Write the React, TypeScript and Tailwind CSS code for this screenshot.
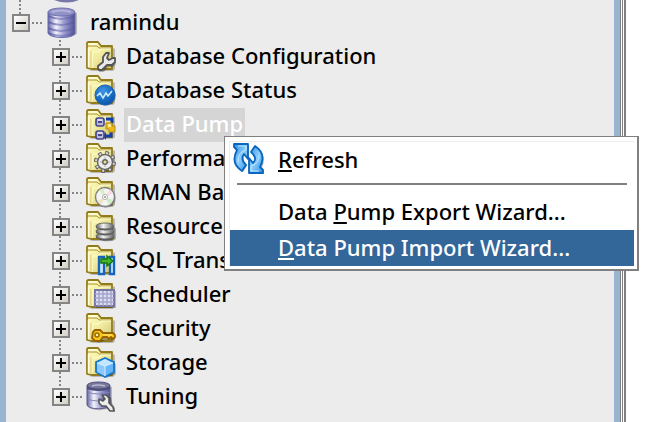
import React from "react";

const dotsX =
  "h-[2px] w-[14px] shrink-0 bg-[repeating-linear-gradient(90deg,transparent_0_2px,#858585_2px_4px)]";
const dotsY =
  "w-[2px] bg-[repeating-linear-gradient(180deg,#858585_0_2px,transparent_2px_4px)]";

function Defs() {
  return (
    <svg className="absolute size-0" aria-hidden="true">
      <defs>
        <linearGradient id="folder" x1="0" y1="0" x2="1" y2="1">
          <stop offset="0" stopColor="#fffdb8" />
          <stop offset="0.5" stopColor="#f1eb9f" />
          <stop offset="1" stopColor="#ccc070" />
        </linearGradient>
        <linearGradient id="cyl" x1="0" x2="1">
          <stop offset="0" stopColor="#6464a8" />
          <stop offset="0.3" stopColor="#f4f4fc" />
          <stop offset="0.6" stopColor="#9c9cd0" />
          <stop offset="1" stopColor="#50509a" />
        </linearGradient>
        <linearGradient id="band" x1="0" x2="1">
          <stop offset="0" stopColor="#5555a0" />
          <stop offset="0.35" stopColor="#9c9cd0" />
          <stop offset="1" stopColor="#505098" />
        </linearGradient>
        <linearGradient id="steel" x1="0" x2="1">
          <stop offset="0" stopColor="#5c5c5c" />
          <stop offset="0.4" stopColor="#f4f4f4" />
          <stop offset="1" stopColor="#606060" />
        </linearGradient>
        <radialGradient id="orb" cx="0.4" cy="0.3" r="0.7">
          <stop offset="0" stopColor="#3d94e4" />
          <stop offset="1" stopColor="#0a55ae" />
        </radialGradient>
        <linearGradient id="arrow" x1="0" y1="0" x2="1" y2="1">
          <stop offset="0" stopColor="#2d8be0" />
          <stop offset="0.5" stopColor="#8bcdfc" />
          <stop offset="1" stopColor="#2b8fe8" />
        </linearGradient>
      </defs>
    </svg>
  );
}

function Folder({ children }: { children: React.ReactNode }) {
  return (
    <svg viewBox="0 0 32 32" className="size-8 shrink-0" aria-hidden="true">
      <path d="M5 29L9 30H29L31 28V8L29 7V27Z" fill="#000" opacity="0.22" />
      <path d="M3 27V2L4 1H14L17 5H28V28H7Z" fill="url(#folder)" stroke="#927b1c" strokeWidth="1.800" strokeLinejoin="round" />
      <path d="M4 5H13L15 7H27" fill="none" stroke="#a8933a" strokeWidth="1" />
      <path d="M4.500 7V26M5 3H13" stroke="#fffee0" strokeWidth="1.400" />
      <path d="M8 27V11H14L17 8H27" fill="none" stroke="#fffdd0" strokeWidth="1.200" />
      <path d="M7 27V10" stroke="#d8cc78" strokeWidth="1" />
      {children}
    </svg>
  );
}

function Wrench() {
  return (
    <>
      <path d="M22 13L20 21L14 26L15 31H20L24 26H29L33 22V18H29L25 20Z" fill="#000" opacity="0.25" />
      <path
        d="M25 12L23 17L25 19L29 17H31V21L28 24H23L18 29H15L14 27V25L19 21V16L22 12Z"
        fill="#e9e9e9" stroke="#555" strokeWidth="1.800" strokeLinejoin="round"
      />
    </>
  );
}

function Database() {
  return (
    <svg viewBox="0 0 32 32" className="size-8 shrink-0" aria-hidden="true">
      <path d="M5 28Q18 34 31 27V6H27Z" fill="#000" opacity="0.22" />
      <path d="M2 5V26C4 32 28 32 29 26V5Z" fill="url(#cyl)" />
      {[9, 15, 21, 26].map((y) => (
        <path
          key={y}
          d={`M2 ${y - 1}Q15 ${y + 5} 29 ${y - 1}V${y + 1}Q15 ${y + 7} 2 ${y + 1}Z`}
          fill="url(#band)"
        />
      ))}
      <path d="M2 5V26C4 32 28 32 29 26V5" fill="none" stroke="#6a6aac" strokeWidth="1" />
      <ellipse cx="15.500" cy="5" rx="13.500" ry="4" fill="#9292c8" stroke="#7070b0" />
      <path d="M6 5Q15 2 25 5" fill="none" stroke="#b4b4dc" strokeWidth="2" />
    </svg>
  );
}

function TuningIcon() {
  return (
    <svg viewBox="0 0 32 32" className="size-8 shrink-0" aria-hidden="true">
      <path d="M5 27Q17 32 28 26V6H25Z" fill="#000" opacity="0.22" />
      <path d="M3 5V24C4 29 25 29 26 24V5Z" fill="url(#cyl)" />
      {[11, 18].map((y) => (
        <path key={y} d={`M3 ${y}Q14 ${y + 4} 26 ${y}`} fill="none" stroke="#8484b4" strokeWidth="1" />
      ))}
      <path d="M3 5V24C4 29 25 29 26 24V5" fill="none" stroke="#5a5a90" />
      <path d="M3 4V8Q14 12 26 8V4Z" fill="#4c4c78" />
      <ellipse cx="14.500" cy="4.500" rx="11.500" ry="3.500" fill="#77779c" stroke="#4f4f7c" />
      <path d="M8 5Q14 3 21 5" fill="none" stroke="#b7b7d0" strokeWidth="1.500" />
      <path d="M17 17L23 23L25 28L31 31V27L28 22L27 16Z" fill="#000" opacity="0.3" />
      <path
        d="M22 14L18 14L21 18L19 20L15 18V22L18 25H22L26 30H30L29 26L25 22V17Z"
        fill="#ededed" stroke="#555" strokeWidth="1.600" strokeLinejoin="round"
      />
    </svg>
  );
}

function Pulse() {
  return (
    <>
      <circle cx="22" cy="21" r="10" fill="#000" opacity="0.25" />
      <circle cx="21" cy="20" r="10" fill="url(#orb)" stroke="#1462b5" />
      <path d="M13 21L16 18L19 23L22 18L24 21L28 16" fill="none" stroke="#c5edff" strokeWidth="1.600" />
    </>
  );
}

function Pump() {
  return (
    <>
      <path d="M22 10H28V14M22 27H27V23" fill="none" stroke="#123fa5" strokeWidth="3" />
      <path d="M22 23V31L19 27Z" fill="#123fa5" />
      {[9, 22].map((y) => (
        <g key={y}>
          <rect x="12" y={y} width="8" height="8" rx="2" fill="#b9bade" stroke="#454588" strokeWidth="1.600" />
          <path d={`M14 ${y + 4}H18`} stroke="#454588" strokeWidth="2" />
          <path d={`M14 ${y + 2}H18`} stroke="#fff" strokeWidth="1" />
        </g>
      ))}
      <path d="M22 14H28V17H31V23H25V20H22Z" fill="#ebb91c" stroke="#b98d12" />
      <path d="M24 15H27V18H24Z" fill="#ffec96" />
    </>
  );
}

function Gear() {
  return (
    <>
      <circle cx="22.500" cy="20.500" r="9" fill="#000" opacity="0.2" />
      <circle cx="21" cy="19" r="9" fill="none" stroke="#5e5e5e" strokeWidth="4" strokeDasharray="3.500 3.568" />
      <circle cx="21" cy="19" r="7.500" fill="#ededed" stroke="#666" strokeWidth="1.500" />
      <circle cx="21" cy="19" r="9" fill="none" stroke="#d8d8d8" strokeWidth="2" strokeDasharray="2 5.068" strokeDashoffset="-0.750" />
      <path d="M21 14V24M16 19H26" stroke="#aaa" />
      <circle cx="21" cy="19" r="3" fill="#666" />
      <circle cx="21" cy="19" r="1.500" fill="#eee18d" />
    </>
  );
}

function Disc() {
  return (
    <>
      <circle cx="22" cy="21" r="10" fill="#000" opacity="0.22" />
      <circle cx="21" cy="20" r="9.500" fill="#f4f4f4" stroke="#808080" strokeWidth="1.400" />
      <path d="M21 20L15 13L20 11Z" fill="#dcecc7" />
      <path d="M21 20L26 12L29 16Z" fill="#f7d9e2" />
      <path d="M21 20L29 23L25 28Z" fill="#cdebc8" />
      <path d="M21 20L13 24L17 28Z" fill="#eee2c1" />
      <circle cx="21" cy="20" r="2.500" fill="#fff" stroke="#b1b1b1" />
      <circle cx="21" cy="20" r="1" fill="#999" />
    </>
  );
}

function Stack() {
  return (
    <>
      <path d="M15 28Q22 33 32 28V17H15Z" fill="#000" opacity="0.25" />
      {[25, 20, 15].map((y) => (
        <g key={y}>
          <path d={`M12 ${y}V${y + 2}Q21 ${y + 7} 30 ${y + 2}V${y}Z`} fill="#555" />
          <ellipse cx="21" cy={y} rx="9" ry="3" fill="url(#steel)" stroke="#6c6c6c" />
        </g>
      ))}
    </>
  );
}

function Transport() {
  return (
    <>
      <path d="M15 13H31V30H26V17H20V30H15Z" fill="#000" opacity="0.2" />
      <path d="M15 12H20V29H15Z M26 12H30V29H26Z" fill="#e8f8ff" stroke="#1764be" strokeWidth="2.400" />
      <path d="M17 13V27M28 13V27" stroke="#8fd4ff" strokeWidth="1" />
      <path d="M17 14H23V11L29 16L23 21V18H17Z" fill="#44b82a" stroke="#167512" strokeWidth="1.500" />
    </>
  );
}

function Calendar() {
  return (
    <>
      <rect x="12" y="12" width="20" height="17" fill="#000" opacity="0.22" />
      <rect x="11" y="11" width="19" height="16" fill="#dedef0" stroke="#7777a5" strokeWidth="2" />
      <path d="M15 12V27M19 12V27M23 12V27M27 12V27M11 15H30M11 19H30M11 23H30" stroke="#a5a5cb" strokeWidth="1.500" />
    </>
  );
}

function Key() {
  return (
    <>
      <path d="M10 26Q14 33 20 27H30L32 24Z" fill="#000" opacity="0.3" />
      <path d="M9 19L11 17H16L19 20H29L31 22V24L29 26L27 24L25 26L23 24H19L16 28H11L8 25Z" fill="#f9c719" stroke="#976300" strokeWidth="1.800" />
      <circle cx="13" cy="22" r="2" fill="#fff3a3" stroke="#9a6900" strokeWidth="1.500" />
      <path d="M19 22H28" stroke="#ffe975" />
    </>
  );
}

function Cube() {
  return (
    <>
      <path d="M13 16L23 12L32 17V27L23 31L13 27Z" fill="#000" opacity="0.22" />
      <path d="M12 15L21 11L30 15V25L21 30L12 25Z" fill="#69b5f9" stroke="#1476cb" strokeWidth="1.800" />
      <path d="M13 16L21 12L29 16L21 19Z" fill="#c3e6ff" />
      <path d="M13 16L21 19V29L13 25Z" fill="#8cc8ff" />
      <path d="M13 16L21 19L29 16M21 19V29" fill="none" stroke="#d9f0ff" />
    </>
  );
}

function RefreshIcon() {
  return (
    <svg viewBox="0 0 32 32" className="size-8 shrink-0" aria-hidden="true">
      <g transform="translate(1 1)" fill="#000" opacity="0.25">
        <path d="M1 1H15V16L11 11Q7 16 13 22L9 28Q-3 20 3 7L1 5Z" />
        <path d="M30 30H16V15L20 20Q25 15 18 9L22 3Q34 11 28 24L30 26Z" />
      </g>
      <g fill="url(#arrow)" stroke="#0966bd" strokeWidth="1.800" strokeLinejoin="round">
        <path d="M1 1H15V16L11 11Q7 16 13 22L9 28Q-3 20 4 7L1 4Z" />
        <path d="M30 30H16V15L20 20Q25 15 18 9L22 3Q34 11 27 24L30 27Z" />
      </g>
      <path d="M5 3H13V7Q4 10 5 19M26 28H18V23Q27 20 26 12" fill="none" stroke="#bde8ff" />
    </svg>
  );
}

function Expander({ open = false, name }: { open?: boolean; name: string }) {
  return (
    <button
      aria-label={name}
      aria-expanded={open}
      className="relative z-10 flex size-[18px] shrink-0 items-center justify-center border-2 border-[#858585] bg-linear-to-br from-white to-[#d2cec5]"
    >
      <svg viewBox="0 0 14 14" className="size-[14px]" aria-hidden="true">
        <path d={open ? "M2 7H12" : "M2 7H12M7 2V12"} stroke="#000" strokeWidth="2" />
      </svg>
    </button>
  );
}

const nodes = [
  { label: "Database Configuration", icon: <Folder><Wrench /></Folder> },
  { label: "Database Status", icon: <Folder><Pulse /></Folder> },
  { label: "Data Pump", icon: <Folder><Pump /></Folder>, selected: true },
  { label: "Performance", icon: <Folder><Gear /></Folder> },
  { label: "RMAN Backup", icon: <Folder><Disc /></Folder> },
  { label: "Resource", icon: <Folder><Stack /></Folder> },
  { label: "SQL Translator", icon: <Folder><Transport /></Folder> },
  { label: "Scheduler", icon: <Folder><Calendar /></Folder> },
  { label: "Security", icon: <Folder><Key /></Folder> },
  { label: "Storage", icon: <Folder><Cube /></Folder> },
  { label: "Tuning", icon: <TuningIcon /> },
];

function ContextMenu() {
  const item = "flex h-9 w-full items-center pb-[2px] pl-12 text-left";
  const key = "decoration-2 underline-offset-2";
  return (
    <div
      role="menu"
      className="absolute top-[136px] left-[218px] z-20 w-[415px] border-t border-r-2 border-b-2 border-l border-[#808080] bg-white pt-1 pr-[3px] pb-[3px] pl-1"
    >
      <div className="border-t border-l border-[#ececec]">
        <button role="menuitem" className="flex h-9 w-full items-center gap-[13px] pb-[2px] pl-[3px] text-left">
          <RefreshIcon />
          <span><u className={key}>R</u>efresh</span>
        </button>
        <hr className="mt-[5px] mr-[7px] mb-[9px] ml-[7px] border-t-2 border-[#808080]" />
        <button role="menuitem" className={item}>
          <span>Data <u className={key}>P</u>ump Export Wizard...</span>
        </button>
        <button role="menuitem" className={`${item} bg-[#336699] text-white`}>
          <span><u className={key}>D</u>ata Pump Import Wizard...</span>
        </button>
      </div>
    </div>
  );
}

export default function App() {
  return (
    <main className="flex h-screen overflow-hidden bg-white font-['Noto_Sans',sans-serif] text-[22px] leading-[30px] font-medium text-black">
      <Defs />
      <div className="w-[6px] shrink-0 bg-[#98b4d1]" />
      <section className="relative min-w-0 flex-1 bg-[#ececec] pt-[6px]">
        <svg viewBox="0 26 32 6" className="absolute top-0 left-[44px] h-[6px] w-8" aria-hidden="true">
          <path d="M4 26Q17 31 29 26Z" fill="#7777aa" />
        </svg>
        <div className={`absolute top-0 left-[13px] h-4 ${dotsY}`} />
        <ul role="tree">
          <li role="treeitem" aria-expanded="true">
            <div className="flex h-[34px] items-center pl-[6px]">
              <Expander open name="Collapse ramindu" />
              <div className={`mr-[2px] ${dotsX}`} />
              <Database />
              <span className="pb-1 pl-3">ramindu</span>
            </div>
            <ul role="group" className="relative">
              <li role="none" className={`absolute top-0 bottom-[17px] left-[53px] ${dotsY}`} />
              {nodes.map((n) => (
                <li key={n.label} role="treeitem" aria-selected={!!n.selected} className="flex h-[34px] items-center pl-[46px]">
                  <Expander name={`Expand ${n.label}`} />
                  <div className={dotsX} />
                  {n.icon}
                  <span className={`ml-2 px-[2px] pb-1 ${n.selected ? "bg-[#d5d5d5] text-white" : ""}`}>{n.label}</span>
                </li>
              ))}
            </ul>
          </li>
        </ul>
        <ContextMenu />
      </section>
      <div className="w-[6px] shrink-0 bg-[#98b4d1]" />
      <div className="w-[4px] shrink-0 border-l border-[#808080] bg-white pl-px"><div className="h-full w-px bg-[#808080]" /></div>
      <div className="w-[2px] shrink-0 bg-[#808080]" />
      <div className="w-6 shrink-0 bg-white" />
    </main>
  );
}
